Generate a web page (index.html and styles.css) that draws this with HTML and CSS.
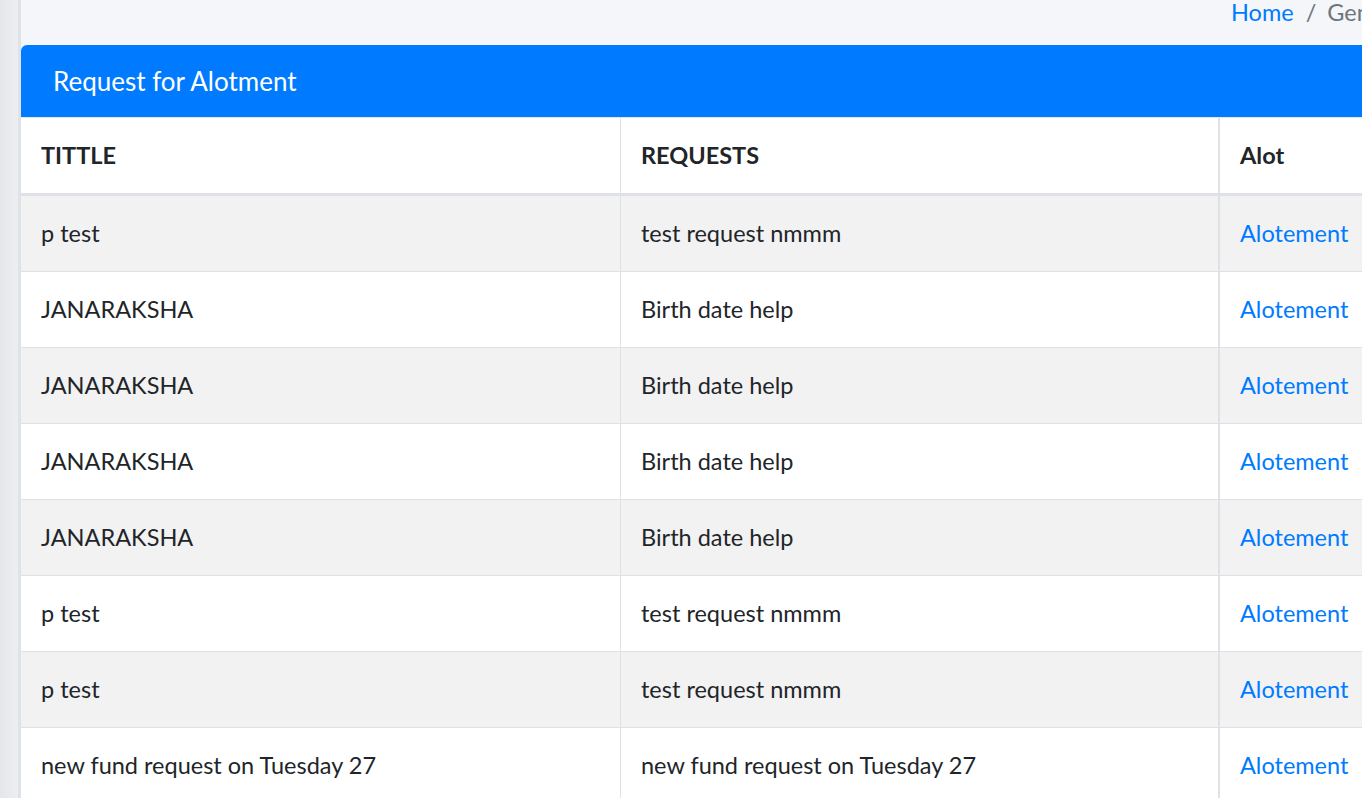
FILE: index.html
```html
<!DOCTYPE html>
<html>
<head>
<meta charset="utf-8">
<link rel="stylesheet" href="styles.css">
</head>
<body>
<div class="layout">
  <div class="side-edge"></div>
  <div class="content">
    <div class="content-header">
      <ol class="breadcrumb">
        <li class="crumb"><a href="#" class="crumb-link">Home</a></li>
        <li class="crumb-sep">/</li>
        <li class="crumb active">General Request</li>
      </ol>
    </div>
    <div class="card">
      <div class="card-header">
        <h3 class="card-title">Request for Alotment</h3>
      </div>
      <table class="table">
        <thead>
          <tr>
            <th class="col-title">TITTLE</th>
            <th class="col-req">REQUESTS</th>
            <th class="col-alot">Alot</th>
          </tr>
        </thead>
        <tbody>
          <tr class="odd"><td>p test</td><td>test request nmmm</td><td><a href="#" class="link">Alotement</a></td></tr>
          <tr><td>JANARAKSHA</td><td>Birth date help</td><td><a href="#" class="link">Alotement</a></td></tr>
          <tr class="odd"><td>JANARAKSHA</td><td>Birth date help</td><td><a href="#" class="link">Alotement</a></td></tr>
          <tr><td>JANARAKSHA</td><td>Birth date help</td><td><a href="#" class="link">Alotement</a></td></tr>
          <tr class="odd"><td>JANARAKSHA</td><td>Birth date help</td><td><a href="#" class="link">Alotement</a></td></tr>
          <tr><td>p test</td><td>test request nmmm</td><td><a href="#" class="link">Alotement</a></td></tr>
          <tr class="odd"><td>p test</td><td>test request nmmm</td><td><a href="#" class="link">Alotement</a></td></tr>
          <tr><td>new fund request on Tuesday 27</td><td>new fund request on Tuesday 27</td><td><a href="#" class="link">Alotement</a></td></tr>
        </tbody>
      </table>
    </div>
  </div>
</div>
</body>
</html>
```
FILE: styles.css
```css
html, body {
  margin: 0;
  padding: 0;
  height: 100%;
  overflow: hidden;
}
body {
  background: #f4f6f9;
  font-family: Lato, "Liberation Sans", sans-serif;
  color: #212529;
}
.layout {
  display: flex;
  min-height: 100%;
}
.side-edge {
  flex: 0 0 18px;
  background: linear-gradient(to right, #e4e6ea, #eceef2);
  border-right: 3px solid #dfe2e6;
}
.content {
  flex: 0 0 auto;
}
.content-header {
  height: 45px;
  display: flex;
  padding-left: 1210px;
}
.breadcrumb {
  display: flex;
  list-style: none;
  margin: 0;
  padding: 0;
  font-size: 23.5px;
  line-height: 25px;
  white-space: nowrap;
}
.crumb-link {
  color: #007bff;
  text-decoration: none;
}
.crumb-sep {
  color: #6c757d;
  padding: 0 11px 0 12px;
}
.crumb.active {
  color: #6c757d;
}
.card {
  background: #fff;
  border-radius: 6px 6px 0 0;
  width: 1800px;
}
.card-header {
  background: #007bff;
  border-radius: 6px 6px 0 0;
  height: 71px;
  padding-bottom: 1px;
  display: flex;
  align-items: center;
  padding-left: 32px;
  border-bottom: 1px solid #e3e6ea;
}
.card-title {
  margin: 0;
  color: #fff;
  font-weight: 400;
  font-size: 26px;
}
.table {
  border-collapse: collapse;
  width: 1800px;
  font-size: 23.5px;
}
.table th, .table td {
  text-align: left;
  padding: 0 20px 2px;
  height: 73px;
  border: 1px solid #dee2e6;
  border-top: 0;
  white-space: nowrap;
}
.table th {
  font-weight: 700;
  border-bottom: 3px solid #dee2e6;
}
.table tr > :first-child {
  border-left: 0;
  padding-left: 20px;
}
.table tr > :nth-child(2) {
  border-right-width: 2px;
}
.col-title {
  width: 559px;
}
.col-req {
  width: 557px;
}
.odd {
  background: #f2f2f2;
}
.link {
  color: #007bff;
  text-decoration: none;
}
```
